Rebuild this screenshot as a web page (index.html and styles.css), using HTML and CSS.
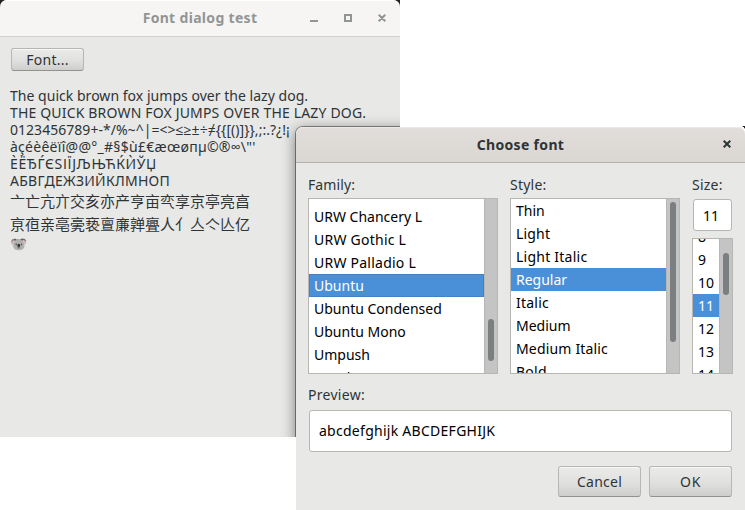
FILE: index.html
```html
<!DOCTYPE html>
<html lang="en">
<head>
<meta charset="utf-8">
<title>Font dialog test</title>
<link rel="stylesheet" href="styles.css">
</head>
<body>
<div class="desktop">
  <section class="window main-window">
    <div class="dialog-shadow"></div>
    <header class="titlebar">
      <h1 class="title">Font dialog test</h1>
      <svg class="controls" width="76" height="8" viewBox="0 0 76 8" fill="none" stroke="#929595" stroke-width="2">
        <path d="M0 7h8M35 1h6v6h-6zM68.7.7l6.6 6.6M75.3.7l-6.6 6.6"/>
      </svg>
    </header>
    <div class="main-content">
      <button class="button font-button">Font...</button>
      <div class="sample">
        <p class="s1">The quick brown fox jumps over the lazy dog.</p>
        <p class="s2">THE QUICK BROWN FOX JUMPS OVER THE LAZY DOG.</p>
        <p class="s3">0123456789+-*/%~^|=&lt;&gt;≤≥±÷≠{{[()]}},;:.?¿!¡</p>
        <p class="s4">àçéèêëïî@@°_#§$ù£€æœøпµ©®∞\"'</p>
        <p class="s5">ЀЁЂЃЄЅІЇЈЉЊЋЌЍЎЏ</p>
        <p class="s6">АБВГДЕЖЗИЙКЛМНОП</p>
        <p class="cjk">亠亡亢亣交亥亦产亨亩亪享京亭亮亯</p>
        <p class="cjk">亰亱亲亳亴亵亶亷亸亹人亻亼亽亾亿</p>
        <p class="emoji">🐨</p>
      </div>
    </div>
  </section>

  <section class="window dialog">
    <header class="titlebar">
      <h2 class="title">Choose font</h2>
      <svg class="controls" width="8" height="8" viewBox="0 0 8 8" fill="none" stroke="#2e3436" stroke-width="2">
        <path d="M.7.7l6.6 6.6M7.3.7L.7 7.3"/>
      </svg>
    </header>
    <div class="dialog-content">
      <div class="pickers">
        <div class="picker">
          <span class="label">Family:</span>
          <div class="list family-list">
            <ul>
              <li>URW Chancery L</li>
              <li class="w2">URW Gothic L</li>
              <li class="w2">URW Palladio L</li>
              <li class="selected focused">Ubuntu</li>
              <li>Ubuntu Condensed</li>
              <li>Ubuntu Mono</li>
              <li>Umpush</li>
              <li>Uroob</li>
            </ul>
            <div class="scrollbar"><i class="thumb"></i></div>
          </div>
        </div>
        <div class="picker">
          <span class="label w2">Style:</span>
          <div class="list style-list">
            <ul>
              <li>Thin</li>
              <li class="w1">Light</li>
              <li class="w2">Light Italic</li>
              <li class="selected">Regular</li>
              <li class="w2">Italic</li>
              <li>Medium</li>
              <li class="w1">Medium Italic</li>
              <li class="w2">Bold</li>
            </ul>
            <div class="scrollbar"><i class="thumb"></i></div>
          </div>
        </div>
        <div class="picker">
          <span class="label w2">Size:</span>
          <div class="entry size-entry">11</div>
          <div class="list size-list">
            <ul>
              <li>8</li>
              <li>9</li>
              <li>10</li>
              <li class="selected">11</li>
              <li>12</li>
              <li>13</li>
              <li>14</li>
            </ul>
            <div class="scrollbar"><i class="thumb"></i></div>
          </div>
        </div>
      </div>
      <span class="label preview-label">Preview:</span>
      <div class="entry preview-entry">abcdefghijk ABCDEFGHIJK</div>
      <div class="actions">
        <button class="button">Cancel</button>
        <button class="button ok">OK</button>
      </div>
    </div>
  </section>
</div>
</body>
</html>
```
FILE: styles.css
```css
* { box-sizing: border-box; }

body {
  margin: 0;
  background: #fff;
  color: #2e3436;
  font: 14px/17px "Noto Sans", "Open Sans", "DejaVu Sans", sans-serif;
}

h1, h2, p, ul { margin: 0; padding: 0; }

.desktop {
  position: relative;
  width: 745px;
  height: 510px;
  overflow: hidden;
}

/* Windows */
.window { position: absolute; background: #e8e8e7; }

.main-window {
  left: 0;
  top: 0;
  width: 400px;
  height: 437px;
  overflow: hidden;
  background: linear-gradient(#222 8px, #e8e8e7 8px);
}

.dialog-shadow {
  position: absolute;
  left: 296px;
  top: 127px;
  width: 449px;
  height: 400px;
  border-radius: 7px 7px 0 0;
  box-shadow: 0 0 0 1px rgba(0, 0, 0, .4), 0 3px 14px 1px rgba(0, 0, 0, .45);
}

.dialog {
  left: 296px;
  top: 127px;
  width: 449px;
  height: 383px;
  border-radius: 7px 7px 0 0;
}

.desktop::after {
  content: "";
  position: absolute;
  right: 0;
  top: 126px;
  width: 5px;
  height: 5px;
  background: radial-gradient(circle at 0 100%, transparent 5px, #222 5.5px);
}

.titlebar {
  position: relative;
  display: flex;
  align-items: center;
  justify-content: center;
  height: 37px;
  border-bottom: 1px solid #d5d0cc;
  border-radius: 7px 7px 0 0;
  background: #f6f5f3;
  box-shadow: inset 0 1px #fff;
  color: #929595;
}

.dialog .titlebar {
  height: 36px;
  border-color: #b7b2ad;
  background: linear-gradient(#e1dedb, #dad6d2);
  box-shadow: inset 0 1px #eceae8;
  color: #2e3436;
}

.title {
  font-size: 14px;
  line-height: 18px;
  letter-spacing: .32px;
}

.controls { position: absolute; right: 14px; top: 14px; }
.dialog .controls { top: 13px; }

/* Buttons */
.button {
  width: 83px;
  height: 31px;
  padding: 0;
  border: 1px solid #b6b6b3;
  border-bottom-color: #92928f;
  border-radius: 3px;
  background: linear-gradient(#ebebea, #e0e0df 55%, #cecfcd);
  box-shadow: inset 0 1px #f8f8f8;
  color: #2e3436;
  font: inherit;
  letter-spacing: .25px;
}

.font-button { display: block; width: 73px; height: 23px; line-height: 20px; }
.ok { letter-spacing: .7px; }

/* Main window */
.main-content { padding: 11px 11px 0; }
.sample { margin: 16px 0 0 -1px; white-space: nowrap; }
.sample p { height: 17px; }
.s1 { letter-spacing: .03px; }
.s2 { letter-spacing: .17px; }
.s3 { letter-spacing: .03px; }
.s4 { letter-spacing: .27px; }
.s5 { letter-spacing: .64px; }
.s6 { letter-spacing: .26px; }
.sample .cjk { height: 23px; font: 15px/23px "Noto Sans CJK SC", sans-serif; }
.emoji { font-size: 14px; }

/* Dialog */
.dialog-content { padding: 13px 12px 0; }
.pickers { display: flex; gap: 12px; }
.picker { display: flex; flex-direction: column; }

.label {
  display: block;
  height: 22px;
  line-height: 17px;
  letter-spacing: .1px;
}

.w1 { letter-spacing: .17px; }
.w2 { letter-spacing: .24px; }

.list {
  display: flex;
  height: 176px;
  border: 1px solid #b6b6b3;
  background: #fff;
  color: #000;
  overflow: hidden;
}

.family-list { width: 190px; }
.style-list { width: 170px; }
.size-list { width: 41px; height: 136px; margin-top: 7px; }

.list ul { flex: 1; height: 100%; list-style: none; white-space: nowrap; }
.family-list ul { padding-top: 6px; }
.size-list ul { margin-top: -14px; }

.list li { height: 23px; padding-left: 5px; line-height: 23px; }
.list .selected { background: #4a90d9; color: #fff; }
.list .focused { box-shadow: inset 0 0 0 1px #4480c2; }

.scrollbar {
  width: 13px;
  padding-left: 3px;
  border-left: 1px solid #b6b6b3;
  background: #c3c4c3;
}

.thumb {
  display: block;
  width: 6px;
  border-radius: 3px;
  background: #7b7f7f;
}

.family-list .thumb { height: 42px; margin-top: 120px; }
.style-list .thumb { height: 140px; margin-top: 3px; }
.size-list .thumb { height: 42px; margin-top: 14px; }

.entry {
  border: 1px solid #b6b6b3;
  border-radius: 3px;
  background: #fff;
  color: #000;
}

.size-entry { width: 39px; height: 32px; margin: 1px 0 0 1px; padding-left: 9px; line-height: 31px; }

.preview-label { margin-top: 12px; height: 24px; letter-spacing: .29px; }

.preview-entry {
  width: 423px;
  height: 42px;
  margin-left: 1px;
  padding-left: 9px;
  line-height: 40px;
  letter-spacing: .27px;
}

.actions {
  display: flex;
  justify-content: flex-end;
  gap: 8px;
  margin: 14px 1px 0 0;
}
```
